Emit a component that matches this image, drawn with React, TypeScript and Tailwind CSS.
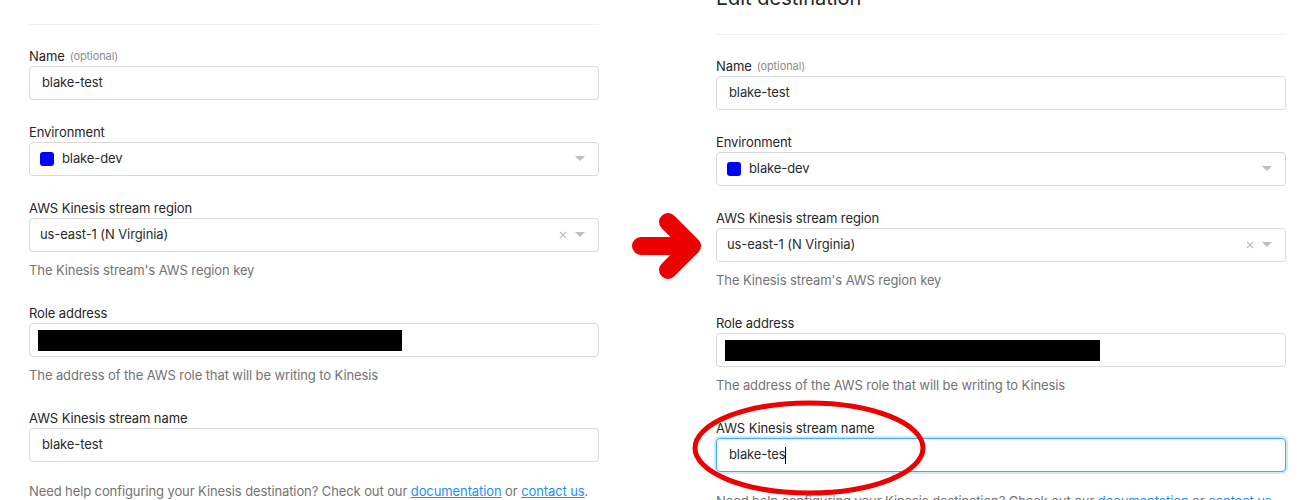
import React from "react";

type Field = {
  label: string;
  optional?: boolean;
  kind: "input" | "select" | "redacted";
  value?: string;
  swatch?: boolean;
  clearable?: boolean;
  help?: string;
  focused?: boolean;
};

const font = { fontFamily: "Inter, 'Noto Sans', sans-serif" };

const Caret = () => (
  <svg width="10" height="6" viewBox="0 0 10 6" className="shrink-0">
    <path d="M0 0 L10 0 L5 5 Z" fill="#bfbfbf" />
  </svg>
);

const Clear = () => (
  <svg width="8" height="8" viewBox="0 0 8 8" className="shrink-0">
    <path d="M1 1 L7 7 M7 1 L1 7" stroke="#bfbfbf" strokeWidth="1.2" />
  </svg>
);

const Control = ({ field, redactWidth }: { field: Field; redactWidth: string }) => {
  if (field.kind === "select") {
    return (
      <div className="h-[34px] w-full rounded-[4px] border border-[#d9d9d9] bg-white flex items-center pl-[10px] pr-[13px] gap-2">
        {field.swatch && <span className="w-[14px] h-[14px] rounded-[3px] bg-[#0000ff] shrink-0" />}
        <span className="flex-1 text-[13px] text-[#2b2b2b]">{field.value}</span>
        {field.clearable && <Clear />}
        <Caret />
      </div>
    );
  }
  if (field.kind === "redacted") {
    return (
      <div className="h-[34px] w-full rounded-[4px] border border-[#d9d9d9] bg-white flex items-center pl-[8px]">
        <div className={`h-[21px] bg-black ${redactWidth}`} />
      </div>
    );
  }
  return (
    <div
      className={
        field.focused
          ? "h-[34px] w-full rounded-[4px] border border-[#40a9ff] shadow-[0_0_0_2px_rgba(24,144,255,0.2)] bg-white flex items-center pl-[12px]"
          : "h-[34px] w-full rounded-[4px] border border-[#d9d9d9] bg-white flex items-center pl-[12px]"
      }
    >
      <span className="text-[13px] text-[#2b2b2b]">{field.value}</span>
      {field.focused && <span className="w-px h-[17px] bg-black" />}
    </div>
  );
};

const Form = ({ fields, redactWidth }: { fields: Field[]; redactWidth: string }) => (
  <div className="flex flex-col tracking-[-0.1px]">
    {fields.map((f) => (
      <div key={f.label} className="mb-[20px]">
        <div className="h-[22px] leading-[20px] flex items-end gap-[5px] text-[13px] text-[#262626]">
          {f.label}
          {f.optional && <span className="text-[11px] text-[#8c8c8c]">(optional)</span>}
        </div>
        <Control field={f} redactWidth={redactWidth} />
        {f.help && <div className="mt-[9px] h-[20px] flex items-center text-[13px] text-[#737373]">{f.help}</div>}
      </div>
    ))}
    <p className="mt-[-1px] text-[13px] text-[#737373] leading-[20px] whitespace-nowrap">
      Need help configuring your Kinesis destination? Check out our{" "}
      <a className="text-[#1890ff] underline">documentation</a> or{" "}
      <a className="text-[#1890ff] underline">contact us</a>.
    </p>
  </div>
);

const base = (streamName: string, focused: boolean): Field[] => [
  { label: "Name", optional: true, kind: "input", value: "blake-test" },
  { label: "Environment", kind: "select", value: "blake-dev", swatch: true },
  {
    label: "AWS Kinesis stream region",
    kind: "select",
    value: "us-east-1 (N Virginia)",
    clearable: true,
    help: "The Kinesis stream's AWS region key",
  },
  { label: "Role address", kind: "redacted", help: "The address of the AWS role that will be writing to Kinesis" },
  { label: "AWS Kinesis stream name", kind: "input", value: streamName, focused },
];

export default function App() {
  return (
    <div className="relative w-[1300px] h-[500px] overflow-hidden bg-white" style={font}>
      <div className="flex">
        {/* before */}
        <div className="ml-[29px] w-[570px] pt-[24px]">
          <div className="h-px bg-[#f0f0f0] mb-[19px]" />
          <Form fields={base("blake-test", false)} redactWidth="w-[364px]" />
        </div>

        {/* after */}
        <div className="ml-[117px] w-[570px]">
          <div className="-mt-[16px] h-[28px] leading-[28px] text-[20px] text-[#262626]">Edit destination</div>
          <div className="mt-[22px] h-px bg-[#f0f0f0] mb-[19px]" />
          <Form fields={base("blake-tes", true)} redactWidth="w-[375px]" />
        </div>
      </div>

      {/* annotations */}
      <svg className="absolute inset-0 pointer-events-none" width="1300" height="500" viewBox="0 0 1300 500">
        <g stroke="#ee0000" strokeWidth="18" strokeLinecap="round" strokeLinejoin="round" fill="none">
          <path d="M641 246 L690 246" />
          <path d="M668 222 L692 246 L668 270" />
        </g>
        <ellipse cx="809" cy="448" rx="114" ry="45" stroke="#ee0000" strokeWidth="5" fill="none" />
      </svg>
    </div>
  );
}
